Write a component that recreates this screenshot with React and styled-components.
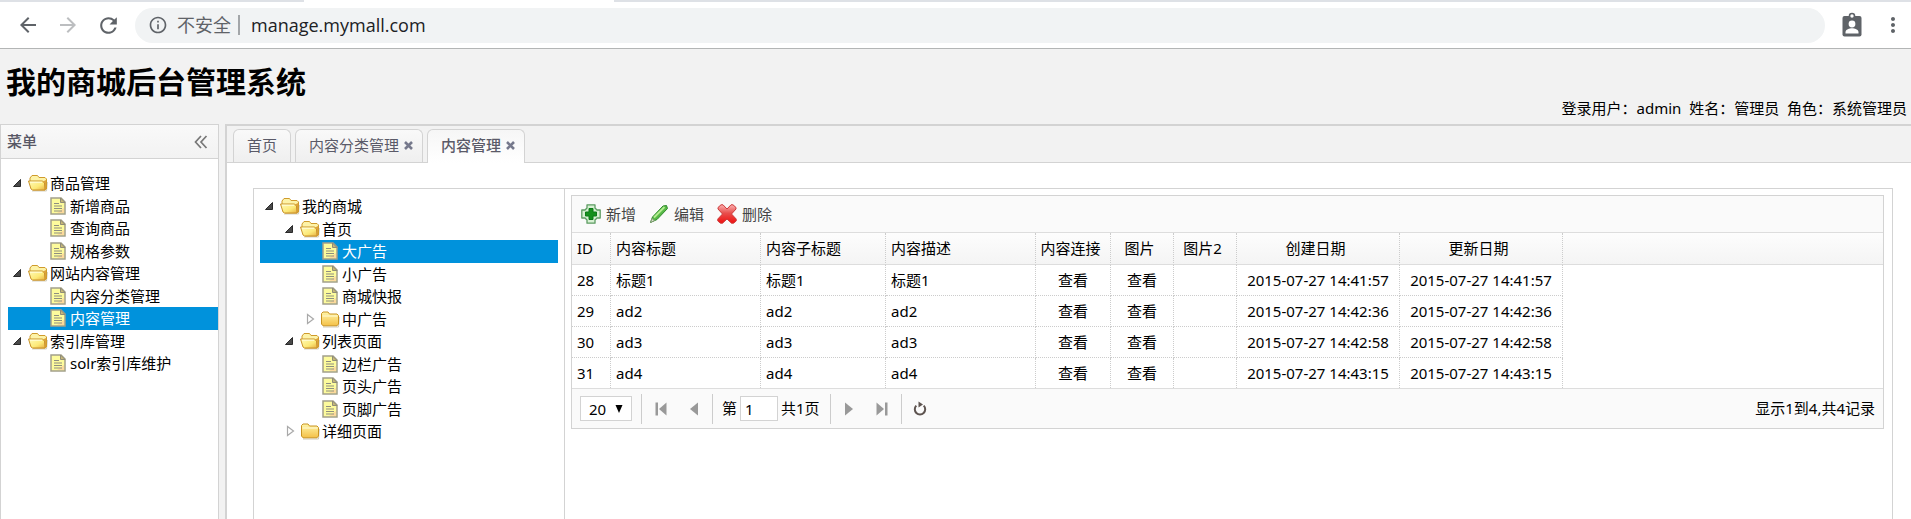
import React from "react";
import styled, { createGlobalStyle, css } from "styled-components";
import {
  MdArrowBack,
  MdArrowForward,
  MdRefresh,
  MdInfoOutline,
  MdMoreVert,
} from "react-icons/md";

const line = "#d3d3d3";
const soft = "#f2f2f2";
const accent = "#0092dc";

const GlobalStyle = createGlobalStyle`
  * { box-sizing: border-box; }
  body {
    margin: 0;
    font-family: "Noto Sans", "Noto Sans CJK SC", sans-serif;
    font-size: 15px;
    line-height: 1.5;
    color: #000;
    background: ${soft};
  }
  button, input, select { font: inherit; color: inherit; }
  button { padding: 0; border: 0; background: none; cursor: pointer; }
  a { color: inherit; text-decoration: none; }
  ul { list-style: none; margin: 0; padding: 0; }
  svg { display: block; flex: none; }
`;

const Page = styled.div`
  display: flex;
  flex-direction: column;
  height: 100vh;
  overflow: hidden;
`;

/* Browser chrome */
const TabStrip = styled.div`
  display: flex;
  height: 2px;
  flex: none;
  background: #fff;
`;
const StripPart = styled.span`
  flex: ${(p) => (p.$width ? `0 0 ${p.$width}px` : 1)};
  background: ${(p) => (p.$active ? "#fff" : "#dee1e6")};
`;
const BrowserBar = styled.div`
  display: flex;
  align-items: center;
  flex: none;
  height: 47px;
  padding: 0 6px 0 16px;
  background: #fff;
  border-bottom: 1px solid #b3b5b5;
`;
const NavButtons = styled.div`
  display: flex;
  gap: 16px;
  margin-right: 14px;
`;
const NavButton = styled.button`
  color: ${(p) => (p.$dim ? "#bcbec0" : "#5f6368")};
`;
const Omnibox = styled.label`
  display: flex;
  align-items: center;
  flex: 1;
  height: 35px;
  padding-left: 13px;
  border-radius: 18px;
  background: #f1f3f4;
  color: #5f6368;
  font-size: 18px;
`;
const Insecure = styled.span`
  padding: 0 7px 0 9px;
  white-space: nowrap;
`;
const OmniboxDivider = styled.span`
  width: 2px;
  height: 20px;
  background: #a3a6a9;
`;
const AddressInput = styled.input`
  flex: 1;
  height: 31px;
  padding: 0 18px 0 11px;
  border: 0;
  outline: 0;
  background: none;
  color: #202124;
  font-family: "Open Sans", "Noto Sans CJK SC", sans-serif;
  font-size: 18px;
`;
const BarActions = styled.div`
  display: flex;
  align-items: center;
  gap: 16px;
  margin-left: 14px;
  color: #5f6368;
`;

/* Site header */
const Header = styled.header`
  display: flex;
  justify-content: space-between;
  flex: none;
  height: 75px;
  padding: 0 4px 0 6px;
`;
const Title = styled.h1`
  margin: 10px 0 0;
  font-size: 30px;
  font-weight: 700;
`;
const UserInfo = styled.div`
  align-self: flex-end;
  padding-bottom: 5px;
  white-space: pre;
`;

/* Body regions */
const Body = styled.div`
  display: flex;
  flex: 1;
  min-height: 0;
  gap: 6px;
`;
const Sidebar = styled.nav`
  flex: 0 0 219px;
  border: 1px solid ${line};
  border-bottom: 0;
  background: #fff;
`;
const SidebarHead = styled.div`
  display: flex;
  align-items: center;
  justify-content: space-between;
  height: 34px;
  padding: 0 10px 0 6px;
  border-bottom: 1px solid ${line};
  background: linear-gradient(#f9f9f9, ${soft});
  color: #575765;
  font-weight: 500;
`;
const Main = styled.main`
  display: flex;
  flex-direction: column;
  flex: 1;
  min-width: 0;
  border: 2px solid ${line};
  border-width: 2px 0 0 2px;
  background: #fff;
`;

/* Tabs */
const Tabs = styled.div`
  display: flex;
  align-items: flex-end;
  gap: 4px;
  flex: none;
  height: 37px;
  padding: 0 6px;
  border-bottom: 1px solid ${line};
  background: ${soft};
`;
const TabItem = styled.div`
  display: flex;
  align-items: center;
  gap: 5px;
  height: 33px;
  padding: 0 ${(p) => (p.$closable ? 9 : 13)}px 2px 13px;
  border: 1px solid ${line};
  border-bottom: 0;
  border-radius: 6px 6px 0 0;
  background: linear-gradient(#f9f9f9, #efefef);
  color: #5a5a68;
  ${(p) =>
    p.$active &&
    css`
      height: 34px;
      margin-bottom: -1px;
      background: linear-gradient(#f6f6f6, #fff);
      font-weight: 500;
    `}
`;

/* Content area */
const Workspace = styled.section`
  display: flex;
  flex: 1;
  min-height: 0;
  margin: 25px 18px 0 26px;
  border: 1px solid ${line};
  border-bottom: 0;
`;
const CategoryPane = styled.aside`
  flex: 0 0 311px;
  padding: 6px;
  border-right: 1px solid ${line};
`;
const GridPane = styled.div`
  flex: 1;
  min-width: 0;
  padding: 6px 8px 6px 6px;
`;

/* Tree */
const TreeList = styled.ul`
  padding: ${(p) => (p.$menu ? "13px 0 0 7px" : "0")};
`;
const TreeRow = styled.li`
  display: flex;
  align-items: center;
  padding-left: ${(p) => p.$level * 20}px;
  ${(p) =>
    p.$selected &&
    css`
      background: ${accent};
      color: #fff;
    `}
`;
const TreeSlot = styled.span`
  width: 20px;
  flex: none;
`;
const TreeLabel = styled.a`
  padding-left: 2px;
  white-space: nowrap;
`;

/* Data grid */
const GridPanel = styled.div`
  border: 1px solid ${line};
`;
const Toolbar = styled.div`
  display: flex;
  align-items: center;
  gap: 13px;
  height: 37px;
  padding: 0 9px;
  border-bottom: 1px solid #ddd;
  background: #fafafa;
`;
const ToolButton = styled.button`
  display: flex;
  align-items: center;
  gap: 5px;
  color: #444;
`;
const Table = styled.table`
  width: 100%;
  table-layout: fixed;
  border-collapse: separate;
  border-spacing: 0;
`;
const Head = styled.thead`
  background: linear-gradient(#fdfdfd, #f4f4f4);
`;
const HeadCell = styled.th`
  width: ${(p) => (p.$width ? `${p.$width}px` : "auto")};
  height: 32px;
  padding: 0 ${(p) => (p.$center ? 9 : 4)}px 0 ${(p) => (p.$center ? 4 : 5)}px;
  border-right: ${(p) => (p.$width ? "1px dotted #ccc" : "0")};
  border-bottom: 1px solid #ddd;
  text-align: ${(p) => (p.$center ? "center" : "left")};
  font-weight: 400;
  white-space: nowrap;
`;
const Cell = styled.td`
  height: 31px;
  padding: 0 5px;
  border-right: 1px dotted #ccc;
  border-bottom: 1px dotted #ccc;
  text-align: ${(p) => (p.$center ? "center" : "left")};
  white-space: nowrap;
  tr:last-child > & {
    height: 30px;
    border-bottom: 0;
  }
`;
const Pager = styled.div`
  display: flex;
  align-items: center;
  height: 40px;
  padding: 0 8px;
  border-top: 1px solid #ddd;
  background: #fafafa;
`;
const SelectBox = styled.span`
  position: relative;
  margin-right: 7px;
  svg {
    position: absolute;
    top: 9px;
    right: 9px;
    pointer-events: none;
  }
`;
const PageSize = styled.select`
  display: block;
  appearance: none;
  width: 52px;
  height: 25px;
  padding: 0 0 0 8px;
  border: 1px solid ${line};
  border-radius: 0;
  background: #fff;
  line-height: 22px;
`;
const Separator = styled.span`
  width: 1px;
  height: 30px;
  margin: 0 2px;
  background: #ccc;
`;
const PagerButton = styled.button`
  display: flex;
  justify-content: center;
  width: 33px;
`;
const PageField = styled.label`
  display: flex;
  align-items: center;
  gap: 3px;
  padding: 0 8px 0 7px;
  white-space: nowrap;
`;
const PageInput = styled.input`
  width: 38px;
  height: 25px;
  padding: 0 4px;
  border: 1px solid ${line};
`;
const Summary = styled.span`
  margin-left: auto;
`;

/* Drawings */
function BadgeIcon() {
  return (
    <svg width="26" height="26" viewBox="0 0 26 26" aria-hidden="true">
      <rect x="3.500" y="4" width="19" height="20.500" rx="2" fill="#5f6368" />
      <circle cx="13" cy="4" r="2.500" fill="#fff" stroke="#5f6368" strokeWidth="1.600" />
      <circle cx="13" cy="12" r="3.400" fill="#fff" />
      <path d="M6.500 21.500V20c0-2.600 4-3.800 6.500-3.800s6.500 1.200 6.500 3.800v1.500z" fill="#fff" />
    </svg>
  );
}

function FolderOpen() {
  return (
    <svg width="20" height="20" viewBox="0 0 20 20" aria-hidden="true">
      <defs>
        <linearGradient id="folderOpen" x1="0" y1="0" x2="1" y2="1">
          <stop offset="0" stopColor="#fffbb8" />
          <stop offset="0.6" stopColor="#fce978" />
          <stop offset="1" stopColor="#e8b040" />
        </linearGradient>
      </defs>
      <path d="M4 18h14.500l1-9" fill="none" stroke="#b9b4a0" opacity=".6" />
      <path d="M2 8V5l2-2.500h5.500l1.500 2h6L18.500 6v10L17 17H5z" fill="#fdf3a8" stroke="#cf9b2c" />
      <path d="M15 8.500l3-1.500v9.500H17z" fill="#dda23a" />
      <path d="M.5 8h13.800l2.200 2 .5 7H4.500L3 16z" fill="url(#folderOpen)" stroke="#c9922a" />
      <path d="M2 9.200h12" stroke="#fffee0" />
    </svg>
  );
}

function FolderClosed() {
  return (
    <svg width="20" height="20" viewBox="0 0 20 20" aria-hidden="true">
      <defs>
        <linearGradient id="folderClosed" x1="0" y1="0" x2="0" y2="1">
          <stop offset="0" stopColor="#fff6a8" />
          <stop offset="1" stopColor="#f4c048" />
        </linearGradient>
      </defs>
      <path d="M3 18h15.500l.8-10" fill="none" stroke="#b9b4a0" opacity=".7" />
      <path d="M1.500 7V4.500L3 3h5l1.500 2H17l1.500 1.500V15L17 16.800H3L1.500 15z" fill="url(#folderClosed)" stroke="#c99422" />
      <path d="M2.500 7h15" stroke="#fffbd8" />
    </svg>
  );
}

function FileIcon() {
  return (
    <svg width="20" height="20" viewBox="0 0 20 20" aria-hidden="true">
      <path d="M3 2h10l4 4v12H3z" fill="#fdfb9c" stroke="#a3a08a" strokeWidth="1.500" />
      <path d="M16 12v5H9z" fill="#fbd29c" opacity=".8" />
      <path d="M12.500 2v4.500H17z" fill="#c8b878" stroke="#8f8c78" />
      <path d="M6 7.500h5M6 10h8M6 12.500h8M6 15h8" stroke="#8f8f80" strokeWidth="1.200" />
    </svg>
  );
}

function Arrow({ open }) {
  return (
    <svg width="20" height="20" viewBox="0 0 20 20" aria-hidden="true">
      {open ? (
        <path d="M5.500 13.500h7V6.500z" fill="#4a4a4a" stroke="#2b2b2b" strokeLinejoin="round" />
      ) : (
        <path d="M7.500 5.500v9l6-4.500z" fill="#fff" stroke="#a9a9a9" strokeWidth="1.200" />
      )}
    </svg>
  );
}

function CollapseIcon() {
  return (
    <svg width="14" height="14" viewBox="0 0 14 14" fill="none" stroke="#777" strokeWidth="1.700" aria-hidden="true">
      <path d="M7 1 1.500 7 7 13M12.500 1 7 7l5.500 6" />
    </svg>
  );
}

function CloseIcon() {
  return (
    <svg width="9" height="9" viewBox="0 0 9 9" stroke="#76798c" strokeWidth="2.600" aria-hidden="true">
      <path d="M1 1l7 7M8 1 1 8" />
    </svg>
  );
}

function AddIcon() {
  return (
    <svg width="20" height="20" viewBox="0 0 20 20" aria-hidden="true">
      <path d="M6 .8h8v3.200l2 2h3.200v8H16l-2 2v3.200H6V16l-2-2H.8V6H4l2-2z" fill="#d7f0d3" stroke="#5c9c62" strokeWidth="1.300" strokeLinejoin="round" />
      <path d="M8 4.500h4V8h3.500v4H12v3.500H8V12H4.500V8H8z" fill="#15901d" stroke="#0b7a17" />
    </svg>
  );
}

function EditIcon() {
  return (
    <svg width="20" height="20" viewBox="0 0 20 20" aria-hidden="true">
      <path d="M1.500 18.500 3.500 13 14 2l3.500-.5 1 3L8 15.500z" fill="#57b947" stroke="#2f8a2b" strokeLinejoin="round" />
      <path d="M5 13.500 15.500 3" stroke="#b4ec90" strokeWidth="1.800" />
      <path d="M1.500 18.500 3 14.500 5.500 16.500z" fill="#dfe6cf" stroke="#7f9a72" strokeLinejoin="round" />
    </svg>
  );
}

function DeleteIcon() {
  return (
    <svg width="20" height="20" viewBox="0 0 20 20" aria-hidden="true">
      <defs>
        <linearGradient id="deleteRed" x1="0" y1="0" x2="0" y2="1">
          <stop offset="0" stopColor="#fbb0b0" />
          <stop offset="0.45" stopColor="#e84f4d" />
          <stop offset="1" stopColor="#f01010" />
        </linearGradient>
      </defs>
      <path
        d="M1 3.500 4 .8h2L10 5l4-4.200h2l3 2.700v1.500L14.500 10l4.700 5v2l-2.700 2.200h-2L10 15l-4.500 4.200h-2L.8 17v-2l4.700-5L1 5z"
        fill="url(#deleteRed)"
        stroke="#cc3a3a"
        strokeLinejoin="round"
      />
    </svg>
  );
}

function PageIcon({ kind }) {
  const flip = kind === "next" || kind === "last";
  const withBar = kind === "first" || kind === "last";
  return (
    <svg width="12" height="14" viewBox="0 0 12 14" fill="#999" aria-hidden="true">
      <g transform={flip ? "rotate(180 6 7)" : undefined}>
        {withBar && <path d="M.5 .5h2.500v13H.5z" />}
        <path d={withBar ? "M11.500.5v13L4 7z" : "M10 .5v13L2 7z"} />
      </g>
    </svg>
  );
}

function ReloadIcon() {
  return (
    <svg width="16" height="16" viewBox="0 0 16 16" aria-hidden="true">
      <path d="M4.300 4.600A5.200 5.200 0 1 0 11.700 4.600" fill="none" stroke="#5e5450" strokeWidth="2" />
      <path d="M6.500.5v6L11 3.500z" fill="#5e5450" />
    </svg>
  );
}

const menu = [
  { text: "商品管理", level: 0, open: true },
  { text: "新增商品", level: 1 },
  { text: "查询商品", level: 1 },
  { text: "规格参数", level: 1 },
  { text: "网站内容管理", level: 0, open: true },
  { text: "内容分类管理", level: 1 },
  { text: "内容管理", level: 1, selected: true },
  { text: "索引库管理", level: 0, open: true },
  { text: "solr索引库维护", level: 1 },
];

const categories = [
  { text: "我的商城", level: 0, open: true },
  { text: "首页", level: 1, open: true },
  { text: "大广告", level: 2, selected: true },
  { text: "小广告", level: 2 },
  { text: "商城快报", level: 2 },
  { text: "中广告", level: 2, open: false },
  { text: "列表页面", level: 1, open: true },
  { text: "边栏广告", level: 2 },
  { text: "页头广告", level: 2 },
  { text: "页脚广告", level: 2 },
  { text: "详细页面", level: 1, open: false },
];

const columns = [
  { label: "ID", width: 39 },
  { label: "内容标题", width: 150 },
  { label: "内容子标题", width: 125 },
  { label: "内容描述", width: 150 },
  { label: "内容连接", width: 75, center: true },
  { label: "图片", width: 63, center: true },
  { label: "图片2", width: 63, center: true },
  { label: "创建日期", width: 163, center: true },
  { label: "更新日期", width: 163, center: true },
];

const rows = [
  { id: 28, name: "标题1", date: "2015-07-27 14:41:57" },
  { id: 29, name: "ad2", date: "2015-07-27 14:42:36" },
  { id: 30, name: "ad3", date: "2015-07-27 14:42:58" },
  { id: 31, name: "ad4", date: "2015-07-27 14:43:15" },
];

function Tree({ nodes, isMenu }) {
  return (
    <TreeList $menu={isMenu}>
      {nodes.map((n) => {
        const branch = n.open !== undefined;
        return (
          <TreeRow key={n.text} $level={n.level} $selected={n.selected}>
            {branch ? (
              <button aria-label={n.open ? "收起" : "展开"}>
                <Arrow open={n.open} />
              </button>
            ) : (
              <TreeSlot />
            )}
            {branch ? n.open ? <FolderOpen /> : <FolderClosed /> : <FileIcon />}
            <TreeLabel href="#">{n.text}</TreeLabel>
          </TreeRow>
        );
      })}
    </TreeList>
  );
}

function Tab({ label, active, closable }) {
  return (
    <TabItem $active={active} $closable={closable}>
      <button>{label}</button>
      {closable && (
        <button aria-label="关闭">
          <CloseIcon />
        </button>
      )}
    </TabItem>
  );
}

export default function App() {
  return (
    <Page>
      <GlobalStyle />
      <TabStrip>
        <StripPart $width={304} />
        <StripPart $width={310} $active />
        <StripPart />
      </TabStrip>
      <BrowserBar>
        <NavButtons>
          <NavButton aria-label="后退"><MdArrowBack size={24} /></NavButton>
          <NavButton aria-label="前进" $dim><MdArrowForward size={24} /></NavButton>
          <NavButton aria-label="刷新"><MdRefresh size={25} /></NavButton>
        </NavButtons>
        <Omnibox>
          <MdInfoOutline size={20} />
          <Insecure>不安全</Insecure>
          <OmniboxDivider />
          <AddressInput defaultValue="manage.mymall.com" aria-label="地址" />
        </Omnibox>
        <BarActions>
          <NavButton aria-label="用户"><BadgeIcon /></NavButton>
          <NavButton aria-label="菜单"><MdMoreVert size={24} /></NavButton>
        </BarActions>
      </BrowserBar>

      <Header>
        <Title>我的商城后台管理系统</Title>
        <UserInfo>{"登录用户：admin\u00a0\u00a0姓名：管理员\u00a0\u00a0角色：系统管理员"}</UserInfo>
      </Header>

      <Body>
        <Sidebar>
          <SidebarHead>
            菜单
            <button aria-label="折叠菜单"><CollapseIcon /></button>
          </SidebarHead>
          <Tree nodes={menu} isMenu />
        </Sidebar>

        <Main>
          <Tabs>
            <Tab label="首页" />
            <Tab label="内容分类管理" closable />
            <Tab label="内容管理" closable active />
          </Tabs>
          <Workspace>
            <CategoryPane>
              <Tree nodes={categories} />
            </CategoryPane>
            <GridPane>
              <GridPanel>
                <Toolbar>
                  <ToolButton><AddIcon />新增</ToolButton>
                  <ToolButton><EditIcon />编辑</ToolButton>
                  <ToolButton><DeleteIcon />删除</ToolButton>
                </Toolbar>
                <Table>
                  <Head>
                    <tr>
                      {columns.map((c) => (
                        <HeadCell key={c.label} $width={c.width} $center={c.center}>
                          {c.label}
                        </HeadCell>
                      ))}
                      <HeadCell />
                    </tr>
                  </Head>
                  <tbody>
                    {rows.map((r) => (
                      <tr key={r.id}>
                        <Cell>{r.id}</Cell>
                        <Cell>{r.name}</Cell>
                        <Cell>{r.name}</Cell>
                        <Cell>{r.name}</Cell>
                        <Cell $center><a href="#">查看</a></Cell>
                        <Cell $center><a href="#">查看</a></Cell>
                        <Cell />
                        <Cell $center>{r.date}</Cell>
                        <Cell $center>{r.date}</Cell>
                      </tr>
                    ))}
                  </tbody>
                </Table>
                <Pager>
                  <SelectBox>
                    <PageSize defaultValue="20" aria-label="每页条数">
                      <option>10</option>
                      <option>20</option>
                      <option>50</option>
                    </PageSize>
                    <svg width="8" height="8" viewBox="0 0 8 8" aria-hidden="true">
                      <path d="M.5 0h7L4 8z" />
                    </svg>
                  </SelectBox>
                  <Separator />
                  <PagerButton aria-label="第一页"><PageIcon kind="first" /></PagerButton>
                  <PagerButton aria-label="上一页"><PageIcon kind="prev" /></PagerButton>
                  <Separator />
                  <PageField>
                    第
                    <PageInput defaultValue="1" />
                    共1页
                  </PageField>
                  <Separator />
                  <PagerButton aria-label="下一页"><PageIcon kind="next" /></PagerButton>
                  <PagerButton aria-label="最后一页"><PageIcon kind="last" /></PagerButton>
                  <Separator />
                  <PagerButton aria-label="刷新列表"><ReloadIcon /></PagerButton>
                  <Summary>显示1到4,共4记录</Summary>
                </Pager>
              </GridPanel>
            </GridPane>
          </Workspace>
        </Main>
      </Body>
    </Page>
  );
}
